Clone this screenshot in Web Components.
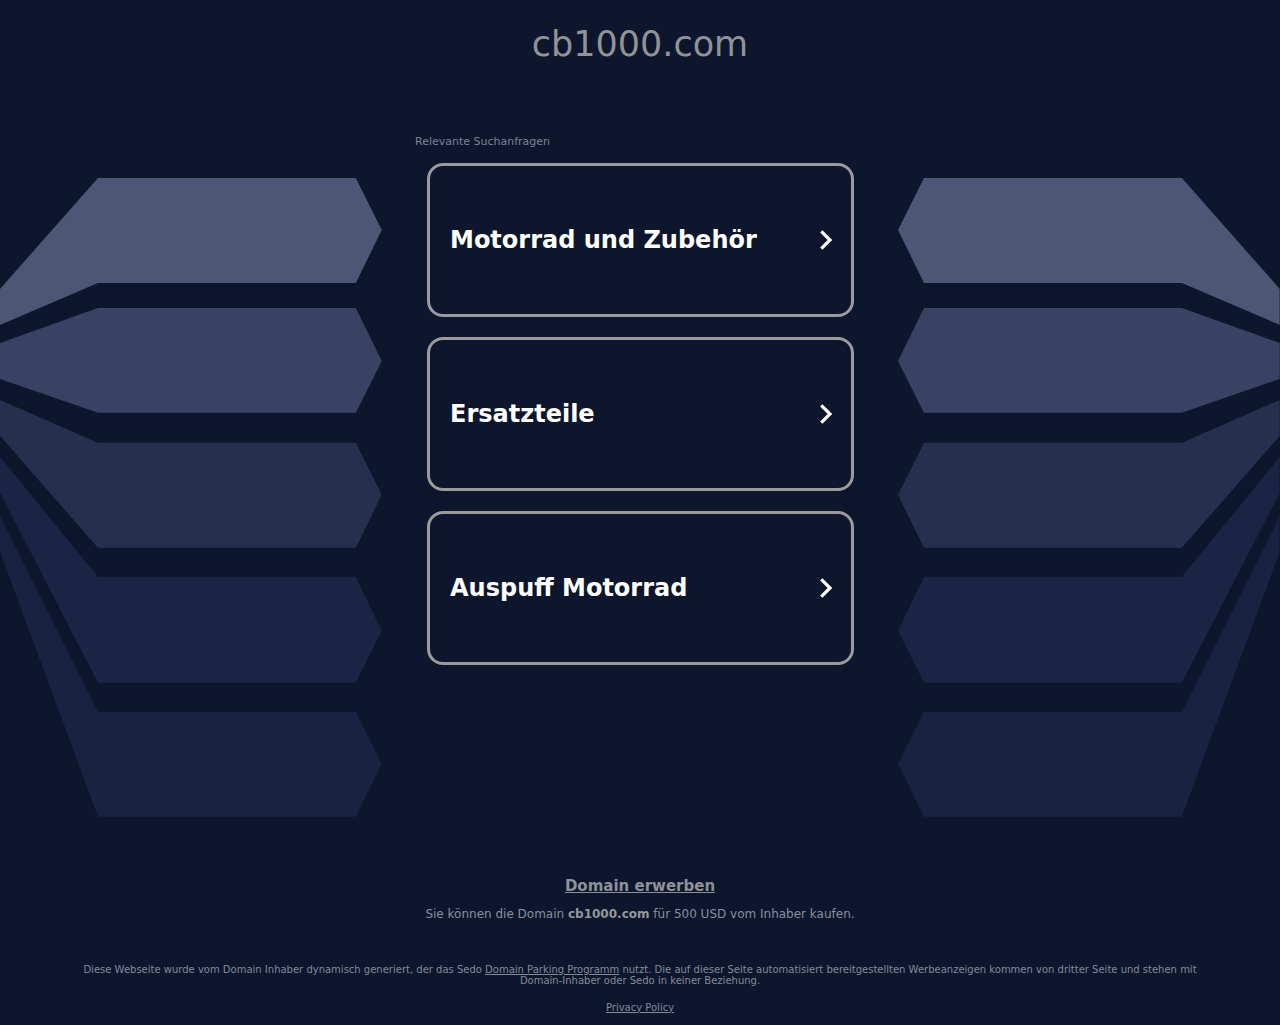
<!DOCTYPE html>
<html lang="de">
<head>
<meta charset="utf-8">
<meta name="viewport" content="width=device-width, initial-scale=1">
<title>cb1000.com</title>
<style>
body { margin: 0; background: #0d162d; color: #8c8f98; font-family: "DejaVu Sans", sans-serif; }
</style>
</head>
<body>
<parking-page>
  <site-header slot="header">cb1000.com</site-header>
  <side-wing slot="left"></side-wing>
  <search-list slot="center" heading="Relevante Suchanfragen">
    <search-card>Motorrad und Zubehör</search-card>
    <search-card>Ersatzteile</search-card>
    <search-card>Auspuff Motorrad</search-card>
  </search-list>
  <side-wing slot="right" mirrored></side-wing>
  <buy-box slot="footer" domain="cb1000.com" price="500 USD"></buy-box>
  <site-footer slot="footer"></site-footer>
</parking-page>
<script>
class BaseElement extends HTMLElement {
  constructor() {
    super();
    this.attachShadow({ mode: 'open' }).innerHTML = this.render();
  }
}

customElements.define('parking-page', class extends BaseElement {
  render() {
    return `<style>
      :host { display: block; }
      main { display: grid; grid-template-columns: minmax(0, 1fr) 450px minmax(0, 1fr); margin-top: 69px; margin-bottom: 60px; }
      .side { margin-top: 43px; display: flex; }
      .right { justify-content: flex-end; }
    </style>
    <slot name="header"></slot>
    <main>
      <div class="side"><slot name="left"></slot></div>
      <slot name="center"></slot>
      <div class="side right"><slot name="right"></slot></div>
    </main>
    <slot name="footer"></slot>`;
  }
});

customElements.define('site-header', class extends BaseElement {
  render() {
    return `<style>
      :host { display: block; padding-top: 22px; text-align: center; }
      h1 { margin: 0; font-size: 35px; line-height: 44px; font-weight: 400; color: #919396; }
    </style><h1><slot></slot></h1>`;
  }
});

customElements.define('side-wing', class extends BaseElement {
  render() {
    return `<style>
      :host { display: block; width: 92%; }
      :host([mirrored]) svg { transform: scaleX(-1); }
      svg { display: block; width: 100%; }
    </style>
    <svg viewBox="0 0 382 639" aria-hidden="true">
      <path fill="#4c5675" d="M0 111 98 0H356L382 52 356 105H98L0 147Z"/>
      <path fill="#394262" d="M0 165 98 130H356L382 183 356 235H98L0 201Z"/>
      <path fill="#25304f" d="M0 222 98 265H356L382 317 356 370H98L0 258Z"/>
      <path fill="#1a2444" d="M0 279 98 399H356L382 453 356 505H98L0 315Z"/>
      <path fill="#182241" d="M0 338 98 534H356L382 586 356 639H98L0 374Z"/>
    </svg>`;
  }
});

customElements.define('search-list', class extends BaseElement {
  render() {
    return `<style>
      :host { display: block; }
      h2 { margin: 0 0 15px; font-size: 11px; line-height: 13px; font-weight: 400; color: #7d8292; }
      nav { display: flex; flex-direction: column; gap: 20px; padding: 0 11px 0 12px; }
    </style>
    <h2>${this.getAttribute('heading')}</h2>
    <nav><slot></slot></nav>`;
  }
});

customElements.define('search-card', class extends BaseElement {
  render() {
    return `<style>
      :host { display: block; }
      a { display: flex; align-items: center; justify-content: space-between; box-sizing: border-box;
          min-height: 154px; padding: 0 18px 0 20px; border: 3px solid #9b9b9d; border-radius: 16px;
          color: #fff; font-size: 24px; line-height: 28px; font-weight: 700; text-decoration: none; }
      svg { flex: none; width: 14px; height: 22px; }
    </style>
    <a href="#"><span><slot></slot></span>
      <svg viewBox="0 0 14 22" aria-hidden="true"><path d="M2.3 2.3 11 11 2.3 19.7" fill="none" stroke="#fff" stroke-width="3.2"/></svg>
    </a>`;
  }
});

customElements.define('buy-box', class extends BaseElement {
  render() {
    return `<style>
      :host { display: block; text-align: center; font-size: 12px; line-height: 14px; color: #8a8f9c; }
      a { display: inline-block; font-size: 15px; line-height: 18px; font-weight: 700; color: #8e9298; }
      p { margin: 12px 0 0; }
      b { color: #949898; }
    </style>
    <a href="#">Domain erwerben</a>
    <p>Sie können die Domain <b>${this.getAttribute('domain')}</b> für ${this.getAttribute('price')} vom Inhaber kaufen.</p>`;
  }
});

customElements.define('site-footer', class extends BaseElement {
  render() {
    return `<style>
      :host { display: block; padding: 43px 80px 12px; text-align: center; font-size: 10px; line-height: 11px; color: #858a98; }
      a { color: inherit; }
      p { margin: 0 0 16px; }
      p:last-child { margin: 0; }
    </style>
    <p>Diese Webseite wurde vom Domain Inhaber dynamisch generiert, der das Sedo <a href="#">Domain Parking Programm</a> nutzt. Die auf dieser Seite automatisiert bereitgestellten Werbeanzeigen kommen von dritter Seite und stehen mit Domain-Inhaber oder Sedo in keiner Beziehung.</p>
    <p><a href="#">Privacy Policy</a></p>`;
  }
});
</script>
</body>
</html>
